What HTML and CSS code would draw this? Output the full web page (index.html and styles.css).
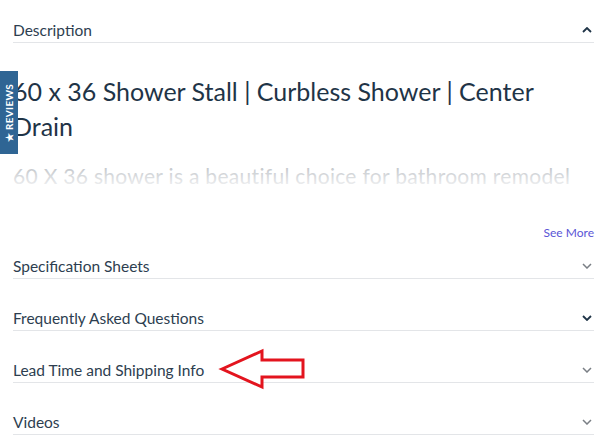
FILE: index.html
```html
<!DOCTYPE html>
<html>
<head>
    <title>Product Details</title>
    <link rel="stylesheet" href="styles.css">
</head>
<body>
    <a class="reviews-tab" href="#"><span>&#9733; REVIEWS</span></a>

    <div class="accordion">
        <div class="acc-item open">
            <div class="acc-head">
                <span>Description</span>
                <svg class="chev dark" viewBox="0 0 10 6"><path d="M1 5 L5 1 L9 5"/></svg>
            </div>
            <div class="acc-body">
                <h2 class="title">60 x 36 Shower Stall | Curbless Shower | Center Drain</h2>
                <div class="excerpt">
                    <p>60 X 36 shower is a beautiful choice for bathroom remodel projects, a curbless design with a center drain.</p>
                </div>
                <div class="see-more"><a href="#">See More</a></div>
            </div>
        </div>

        <div class="acc-item">
            <div class="acc-head">
                <span>Specification Sheets</span>
                <svg class="chev" viewBox="0 0 10 6"><path d="M1 1 L5 5 L9 1"/></svg>
            </div>
        </div>

        <div class="acc-item">
            <div class="acc-head">
                <span>Frequently Asked Questions</span>
                <svg class="chev dark" viewBox="0 0 10 6"><path d="M1 1 L5 5 L9 1"/></svg>
            </div>
        </div>

        <div class="acc-item">
            <div class="acc-head">
                <span>Lead Time and Shipping Info</span>
                <svg class="chev" viewBox="0 0 10 6"><path d="M1 1 L5 5 L9 1"/></svg>
            </div>
        </div>

        <div class="acc-item">
            <div class="acc-head">
                <span>Videos</span>
                <svg class="chev" viewBox="0 0 10 6"><path d="M1 1 L5 5 L9 1"/></svg>
            </div>
        </div>
    </div>

    <!-- annotation arrow drawn over the page -->
    <svg class="callout" width="86" height="44" viewBox="0 0 86 44">
        <path d="M2 20 L42 2 L42 11 L83 11 L83 28 L42 28 L42 38 Z"/>
    </svg>
</body>
</html>
```

FILE: styles.css
```css
body {
    margin: 0;
    font-family: Lato, "Open Sans", sans-serif;
    color: #1f3447;
    background: #fff;
}

.reviews-tab {
    position: absolute;
    left: 0;
    top: 71px;
    width: 18px;
    height: 83px;
    background-color: #2f6594;
    display: flex;
    align-items: center;
    justify-content: center;
    text-decoration: none;
    z-index: 2;
}

.reviews-tab span {
    transform: rotate(-90deg);
    white-space: nowrap;
    color: #fff;
    font-size: 10px;
    font-weight: bold;
    letter-spacing: 0.3px;
}

.accordion {
    width: 581px;
    margin-left: 13px;
    padding-top: 4px;
    display: flex;
    flex-direction: column;
}

.acc-item + .acc-item {
    margin-top: 13px;
}

.acc-item.open + .acc-item {
    margin-top: 0;
}

.acc-head {
    display: flex;
    justify-content: space-between;
    align-items: center;
    padding: 15px 0 1px;
    line-height: 22px;
    font-size: 15.5px;
    color: #2d3e50;
    border-bottom: 1px solid #e3e5e8;
}

.chev {
    width: 10px;
    height: 6px;
    margin-right: 2px;
    fill: none;
    stroke: #7a7f85;
    stroke-width: 1.5;
}

.chev.dark {
    stroke: #1f3447;
    stroke-width: 1.8;
}

.title {
    margin: 31px 0 0;
    font-size: 25px;
    font-weight: normal;
    line-height: 35px;
    color: #1f3447;
}

.excerpt {
    position: relative;
    height: 67px;
    margin-top: 15px;
    overflow: hidden;
}

.excerpt p {
    margin: 0;
    font-size: 21px;
    line-height: 34px;
    letter-spacing: 0.3px;
    color: #7d858e;
}

.excerpt::after {
    content: "";
    position: absolute;
    inset: 0;
    background: linear-gradient(rgba(255, 255, 255, 0.4) 0, #fff 34px);
}

.see-more {
    text-align: right;
    line-height: 14px;
    font-size: 12px;
}

.see-more a {
    color: #5a55d6;
    text-decoration: none;
}

.callout {
    position: absolute;
    left: 220px;
    top: 349px;
    overflow: visible;
}

.callout path {
    fill: #fff;
    stroke: #e3141e;
    stroke-width: 3;
    stroke-linejoin: miter;
}
```
